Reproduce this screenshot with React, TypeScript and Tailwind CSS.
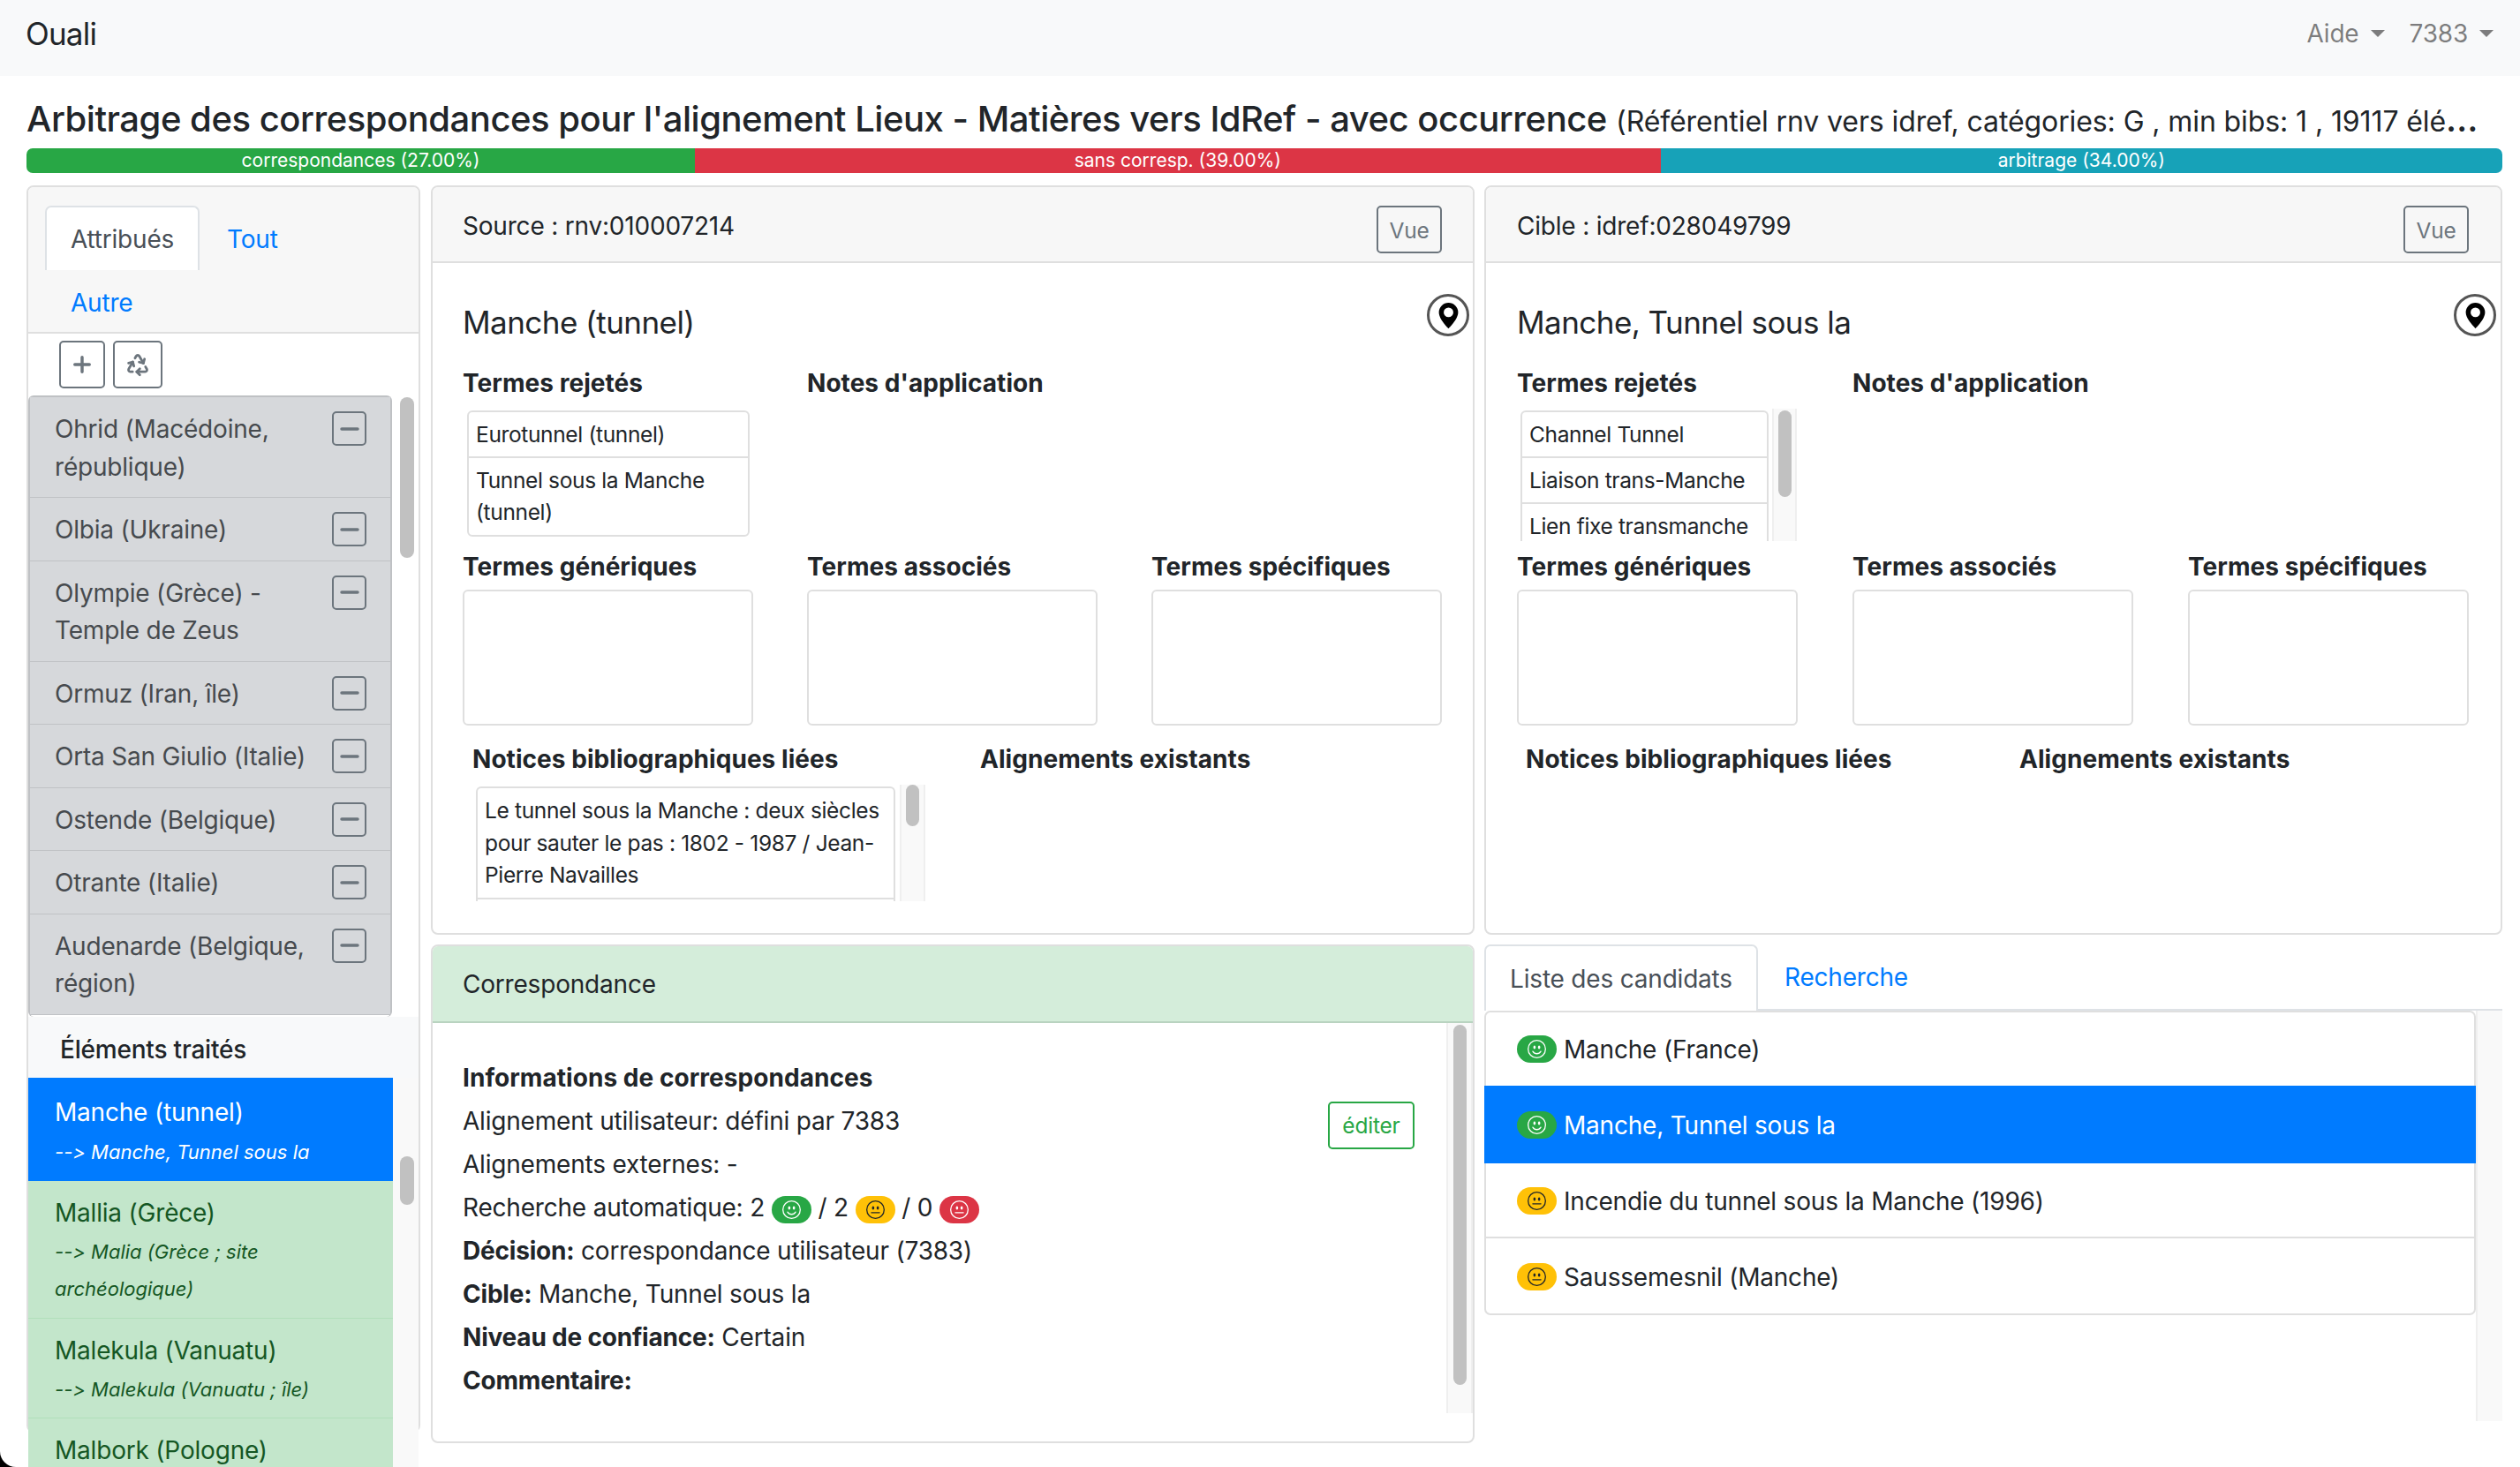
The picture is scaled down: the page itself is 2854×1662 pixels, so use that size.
import { Recycle } from 'lucide-react';
import { BsDashLg, BsEmojiNeutral, BsEmojiSmile, BsGeoAltFill, BsPlusLg } from 'react-icons/bs';

const topItems = [
  'Ohrid (Macédoine, république)',
  'Olbia (Ukraine)',
  'Olympie (Grèce) - Temple de Zeus',
  'Ormuz (Iran, île)',
  'Orta San Giulio (Italie)',
  'Ostende (Belgique)',
  'Otrante (Italie)',
  'Audenarde (Belgique, région)',
];

const doneItems = [
  { name: 'Manche (tunnel)', target: 'Manche, Tunnel sous la', active: true },
  { name: 'Mallia (Grèce)', target: 'Malia (Grèce ; site archéologique)', active: false },
  { name: 'Malekula (Vanuatu)', target: 'Malekula (Vanuatu ; île)', active: false },
  { name: 'Malbork (Pologne)', target: 'Malbork (Pologne)', active: false },
];

const candidates = [
  { name: 'Manche (France)', level: 'ok', active: false },
  { name: 'Manche, Tunnel sous la', level: 'ok', active: true },
  { name: 'Incendie du tunnel sous la Manche (1996)', level: 'mid', active: false },
  { name: 'Saussemesnil (Manche)', level: 'mid', active: false },
];

function Badge({ level }: { level: string }) {
  if (level === 'ok')
    return (
      <span className="inline-flex h-[31px] w-[45px] shrink-0 items-center justify-center rounded-full bg-[#28a745] align-[-3px] text-white">
        <BsEmojiSmile className="h-[21px] w-[21px]" />
      </span>
    );
  if (level === 'mid')
    return (
      <span className="inline-flex h-[31px] w-[45px] shrink-0 items-center justify-center rounded-full bg-[#ffc107] align-[-3px] text-[#212529]">
        <BsEmojiNeutral className="h-[21px] w-[21px]" />
      </span>
    );
  return (
    <span className="inline-flex h-[31px] w-[45px] shrink-0 items-center justify-center rounded-full bg-[#dc3545] align-[-3px] text-white">
      <BsEmojiNeutral className="h-[21px] w-[21px]" />
    </span>
  );
}

function Pin() {
  return (
    <span className="flex h-[48px] w-[48px] items-center justify-center rounded-full border-[3px] border-[#555] text-black">
      <BsGeoAltFill className="h-[29px] w-[29px]" />
    </span>
  );
}

function VueButton() {
  return (
    <button className="flex h-[54px] w-[74px] items-center justify-center rounded-[5px] border-2 border-[#6c757d] pt-[1px] text-[24.5px] text-[#6c757d]">
      Vue
    </button>
  );
}

function Label({ children }: { children: string }) {
  return <h6 className="h-[42px] text-[28px] leading-[42px] font-bold tracking-[0.05px]">{children}</h6>;
}

function EmptyBox() {
  return <div className="mt-[5px] h-[154px] rounded-[6px] border-2 border-[#dfdfdf]" />;
}

function SubRow({ children }: { children: string }) {
  return <div className="border-b-2 border-[#dfdfdf] px-[8px] py-[6.75px] text-[24.5px] leading-[36.5px] tracking-[-0.35px] last:border-b-0">{children}</div>;
}

function Track({ className, thumb }: { className: string; thumb: string }) {
  return (
    <div className={`border-x-2 border-[#efefef] bg-[#f9f9f9] ${className}`}>
      <div className={`mx-auto w-[15px] rounded-[8px] bg-[#c1c1c1] ${thumb}`} />
    </div>
  );
}

export default function App() {
  return (
    <div className="relative h-[1662px] w-[2854px] overflow-hidden bg-white font-['Inter',sans-serif] text-[28px] leading-[42px] tracking-[-0.2px] text-[#212529]">
      <nav className="flex h-[86px] items-start justify-between bg-[#f8f9fa] pt-[17px] pl-[29px]">
        <a className="text-[35px] leading-[42px] tracking-[-0.8px]">Ouali</a>
        <div className="flex items-center pr-[30px] text-[28px] text-[rgba(0,0,0,0.5)]">
          <span>Aide</span>
          <span className="mr-[28px] ml-[13px] h-0 w-0 border-x-[8px] border-t-[8px] border-x-transparent border-t-[rgba(0,0,0,0.5)]" />
          <span>7383</span>
          <span className="ml-[13px] h-0 w-0 border-x-[8px] border-t-[8px] border-x-transparent border-t-[rgba(0,0,0,0.5)]" />
        </div>
      </nav>

      <div className="pr-[20px] pl-[30px]">
        <h4 className="mt-[25px] h-[48px] w-[2787px] truncate text-[40px] leading-[48px] font-medium tracking-[-0.47px]">
          Arbitrage des correspondances pour l'alignement Lieux - Matières vers IdRef - avec occurrence{' '}
          <small className="text-[32px] font-normal tracking-[-0.1px]">(Référentiel rnv vers idref, catégories: G , min bibs: 1 , 19117 éléments)</small>
        </h4>

        <div className="mt-[9px] flex h-[28px] overflow-hidden rounded-[7px] text-center text-[21px] leading-[28px] tracking-normal text-white">
          <div className="w-[27%] bg-[#28a745]">correspondances (27.00%)</div>
          <div className="w-[39%] bg-[#dc3545]">sans corresp. (39.00%)</div>
          <div className="w-[34%] bg-[#17a2b8]">arbitrage (34.00%)</div>
        </div>

        <div className="mt-[14px] flex">
          {/* colonne gauche */}
          <aside className="h-[1413px] w-[446px] shrink-0 rounded-[8px] border-2 border-[#dfdfdf]">
            <div className="h-[166px] rounded-t-[6px] border-b-2 border-[#dfdfdf] bg-[#f7f7f7] pt-[21px] pl-[19px]">
              <div className="flex h-[73px]">
                <div className="flex w-[175px] items-center justify-center rounded-t-[7px] border-x-2 border-t-2 border-[#dee2e6] bg-white pt-[1px] text-[#495057]">Attribués</div>
                <div className="flex items-center pt-[2px] pl-[31px] text-[#007bff]">Tout</div>
              </div>
              <div className="flex h-[72px] items-center pt-[2px] pl-[29px] text-[#007bff]">Autre</div>
            </div>
            <div className="flex h-[70px] gap-[9px] pt-[8px] pl-[35px]">
              <button className="flex h-[54px] w-[52px] items-center justify-center rounded-[5px] border-2 border-[#6c757d] text-[#6c757d]">
                <BsPlusLg className="h-[24px] w-[24px] stroke-[1.3]" />
              </button>
              <button className="flex h-[54px] w-[56px] items-center justify-center rounded-[5px] border-2 border-[#6c757d] text-[#6c757d]">
                <Recycle className="h-[28px] w-[28px]" strokeWidth={2.4} />
              </button>
            </div>

            <div className="flex h-[704px] overflow-hidden">
              <ul className="w-[412px] shrink-0 rounded-[6px] border-x-2 border-t-2 border-[#bfc1c4]">
                {topItems.map((item) => (
                  <li key={item} className="flex justify-between border-b-[1.5px] border-[#c0c2c5] bg-[#d6d8db] pt-[15px] pr-[27px] pb-[13px] pl-[28px] leading-[42.5px] text-[#464a4e]">
                    <span className="w-[300px]">{item}</span>
                    <button className="mt-[1px] flex h-[39px] w-[39px] shrink-0 items-center justify-center rounded-[5px] border-2 border-[#6c757d] text-[#6c757d]">
                      <BsDashLg className="h-[26px] w-[26px] stroke-[1.2]" />
                    </button>
                  </li>
                ))}
              </ul>
              <div className="flex-1 pt-[2px]">
                <div className="ml-[9px] h-[182px] w-[16px] rounded-[8px] bg-[#c1c1c1]" />
              </div>
            </div>

            <div className="flex h-[69px] items-center bg-[#f8f9fa] pt-[4px] pl-[36px] font-medium">Éléments traités</div>

            <div className="flex bg-[#f9f9f9]">
              <ul className="w-[413px] shrink-0 bg-white">
                {doneItems.map((item) =>
                  item.active ? (
                    <li key={item.name} className="bg-[#007bff] px-[30px] pt-[18px] pb-[12px] leading-[42px] text-white">
                      <div>{item.name}</div>
                      <div className="mt-[3px] text-[22px] tracking-normal italic [font-feature-settings:'calt'_0]">--&gt; {item.target}</div>
                    </li>
                  ) : (
                    <li key={item.name} className="border-b-[1.5px] border-[#b1dfbb] bg-[#c3e6cb] px-[30px] pt-[15px] pb-[11.5px] leading-[42px] text-[#155724]">
                      <div>{item.name}</div>
                      <div className="mt-[2px] text-[22px] tracking-normal italic [font-feature-settings:'calt'_0]">--&gt; {item.target}</div>
                    </li>
                  ),
                )}
              </ul>
              <div className="flex-1 pt-[89px]">
                <div className="ml-[8px] h-[55px] w-[16px] rounded-[8px] bg-[#c1c1c1]" />
              </div>
            </div>
          </aside>

          {/* colonne centrale */}
          <main className="ml-[12px] w-[1182px] shrink-0">
            <section className="h-[849px] rounded-[8px] border-2 border-[#dfdfdf]">
              <header className="flex h-[86px] justify-between rounded-t-[6px] border-b-2 border-[#dfdfdf] bg-[#f7f7f7] pt-[21px] pr-[35px] pl-[34px]">
                <span className="mt-[2px]">Source : rnv:010007214</span>
                <VueButton />
              </header>
              <div className="pt-[46px] pr-[35px] pl-[34px]">
                <div className="flex justify-between">
                  <h5 className="text-[35px] leading-[42px] font-normal tracking-[-0.55px]">Manche (tunnel)</h5>
                  <span className="-mt-[11px] -mr-[31px]">
                    <Pin />
                  </span>
                </div>
                <div className="mt-[27px] grid h-[208px] grid-cols-3 gap-x-[61px]">
                  <div>
                    <Label>Termes rejetés</Label>
                    <div className="mt-[10px] ml-[5px] w-[320px] rounded-[6px] border-2 border-[#dfdfdf]">
                      <SubRow>Eurotunnel (tunnel)</SubRow>
                      <SubRow>Tunnel sous la Manche (tunnel)</SubRow>
                    </div>
                  </div>
                  <div className="col-span-2">
                    <Label>Notes d'application</Label>
                  </div>
                </div>
                <div className="grid grid-cols-3 gap-x-[61px]">
                  <div>
                    <Label>Termes génériques</Label>
                    <EmptyBox />
                  </div>
                  <div>
                    <Label>Termes associés</Label>
                    <EmptyBox />
                  </div>
                  <div>
                    <Label>Termes spécifiques</Label>
                    <EmptyBox />
                  </div>
                </div>
                <div className="mt-[17px] flex pl-[11px]">
                  <div className="w-[575px]">
                    <Label>Notices bibliographiques liées</Label>
                    <div className="mt-[8px] flex h-[132px] overflow-hidden">
                      <div className="mt-[2px] ml-[4px] w-[475px] rounded-t-[6px] border-x-2 border-t-2 border-[#dfdfdf]">
                        <div className="border-b-2 border-[#dfdfdf] px-[8px] py-[7px] text-[24.5px] leading-[36.5px] tracking-[-0.35px]">
                          Le tunnel sous la Manche : deux siècles pour sauter le pas : 1802 - 1987 / Jean-Pierre Navailles
                        </div>
                      </div>
                      <Track className="ml-[5px] w-[29px]" thumb="mt-0 h-[47px]" />
                    </div>
                  </div>
                  <Label>Alignements existants</Label>
                </div>
              </div>
            </section>

            <section className="mt-[11px] h-[565px] rounded-[8px] border-2 border-[#dfdfdf]">
              <header className="flex h-[87px] items-center rounded-t-[6px] border-b-2 border-[#b9d3c0] bg-[#d4edda] pl-[34px]">Correspondance</header>
              <div className="flex h-[442px]">
                <div className="flex-1 pt-[38px] pr-[36px] pl-[34px] leading-[49px]">
                  <div className="h-[49px] font-bold tracking-[0.05px]">Informations de correspondances</div>
                  <div className="flex h-[49px] justify-between">
                    <span>Alignement utilisateur: défini par 7383</span>
                    <button className="mt-[2px] flex h-[54px] w-[98px] items-center justify-center rounded-[5px] border-2 border-[#28a745] text-[24.5px] text-[#28a745]">éditer</button>
                  </div>
                  <div className="h-[49px]">Alignements externes: -</div>
                  <div className="h-[49px]">
                    Recherche automatique: 2 <Badge level="ok" /> / 2 <Badge level="mid" /> / 0 <Badge level="ko" />
                  </div>
                  <div className="h-[49px]">
                    <strong className="font-bold">Décision:</strong> correspondance utilisateur (7383)
                  </div>
                  <div className="h-[49px]">
                    <strong className="font-bold">Cible:</strong> Manche, Tunnel sous la
                  </div>
                  <div className="h-[49px]">
                    <strong className="font-bold">Niveau de confiance:</strong> Certain
                  </div>
                  <div className="h-[49px] font-bold">Commentaire:</div>
                </div>
                <Track className="w-[30px] pt-[2px]" thumb="h-[408px]" />
              </div>
            </section>
          </main>

          {/* colonne droite */}
          <div className="ml-[11px] w-[1153px] shrink-0">
            <section className="h-[849px] rounded-[8px] border-2 border-[#dfdfdf]">
              <header className="flex h-[86px] justify-between rounded-t-[6px] border-b-2 border-[#dfdfdf] bg-[#f7f7f7] pt-[21px] pr-[36px] pl-[35px]">
                <span className="mt-[2px]">Cible : idref:028049799</span>
                <VueButton />
              </header>
              <div className="pt-[46px] pr-[36px] pl-[35px]">
                <div className="flex justify-between">
                  <h5 className="text-[35px] leading-[42px] font-normal tracking-[-0.55px]">Manche, Tunnel sous la</h5>
                  <span className="-mt-[11px] -mr-[31px]">
                    <Pin />
                  </span>
                </div>
                <div className="mt-[27px] grid h-[208px] grid-cols-3 gap-x-[62px]">
                  <div>
                    <Label>Termes rejetés</Label>
                    <div className="mt-[8px] flex h-[150px] overflow-hidden">
                      <div className="mt-[2px] ml-[4px] w-[281px] rounded-t-[6px] border-x-2 border-t-2 border-[#dfdfdf]">
                        <SubRow>Channel Tunnel</SubRow>
                        <SubRow>Liaison trans-Manche</SubRow>
                        <SubRow>Lien fixe transmanche</SubRow>
                      </div>
                      <Track className="ml-[4px] w-[28px] pt-[2px]" thumb="h-[98px]" />
                    </div>
                  </div>
                  <div className="col-span-2">
                    <Label>Notes d'application</Label>
                  </div>
                </div>
                <div className="grid grid-cols-3 gap-x-[62px]">
                  <div>
                    <Label>Termes génériques</Label>
                    <EmptyBox />
                  </div>
                  <div>
                    <Label>Termes associés</Label>
                    <EmptyBox />
                  </div>
                  <div>
                    <Label>Termes spécifiques</Label>
                    <EmptyBox />
                  </div>
                </div>
                <div className="mt-[17px] flex pl-[10px]">
                  <div className="w-[559px]">
                    <Label>Notices bibliographiques liées</Label>
                  </div>
                  <Label>Alignements existants</Label>
                </div>
              </div>
            </section>

            <div className="mt-[11px] flex h-[75px] items-stretch border-b-2 border-[#dee2e6]">
              <div className="-mb-[2px] flex w-[310px] items-center justify-center rounded-t-[7px] border-x-2 border-t-2 border-[#dee2e6] bg-white text-[#495057]">Liste des candidats</div>
              <div className="flex items-center pl-[30px] text-[#007bff]">Recherche</div>
            </div>
            <div className="flex h-[465px]">
              <ul className="h-fit w-[1123px] shrink-0 rounded-[7px] border-2 border-[#dfdfdf]">
                {candidates.map((c, i) => (
                  <li
                    key={c.name}
                    className={
                      c.active
                        ? '-mx-[2px] flex h-[88px] items-center gap-[8px] bg-[#007bff] pt-[1px] pl-[37px] text-white'
                        : i === 0
                          ? 'flex h-[83px] items-center gap-[8px] pl-[35px]'
                          : i === 2
                            ? 'flex h-[85px] items-center gap-[8px] border-b-2 border-[#dfdfdf] pt-[2px] pl-[35px]'
                            : 'flex h-[85px] items-center gap-[8px] pt-[2px] pl-[35px]'
                    }
                  >
                    <Badge level={c.level} />
                    <span>{c.name}</span>
                  </li>
                ))}
              </ul>
              <div className="w-[30px] border-l-2 border-[#efefef] bg-[#f9f9f9]" />
            </div>
          </div>
        </div>
      </div>

      {/* coin de la fenêtre */}
      <div className="absolute bottom-0 left-0 h-[18px] w-[18px] bg-black">
        <div className="h-full w-full rounded-bl-[18px] bg-white" />
      </div>
    </div>
  );
}
